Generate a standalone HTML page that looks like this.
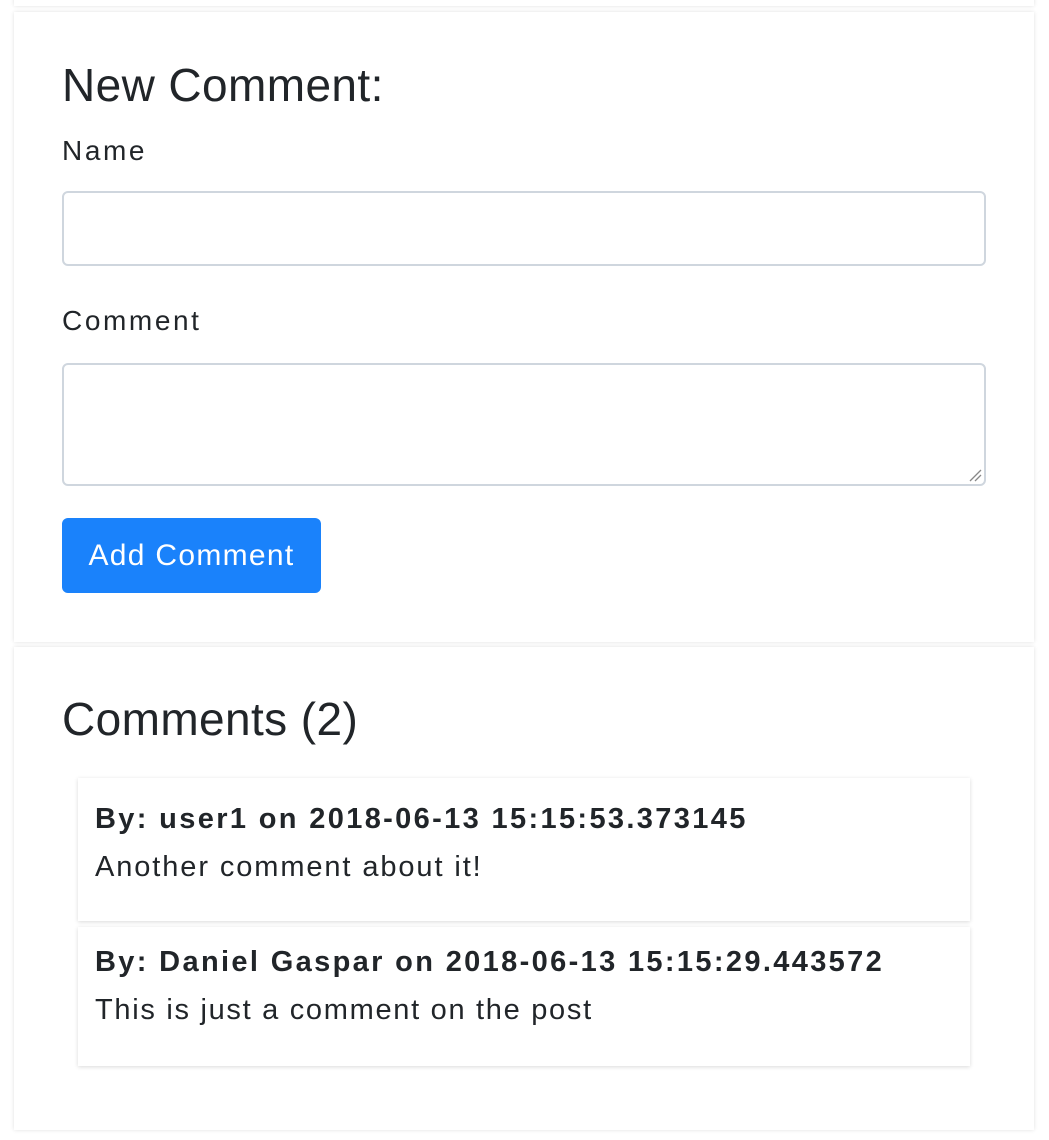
<!DOCTYPE html>
<html><head><style>
body{margin:0;background:#fff;font-family:"Liberation Sans",Arial,sans-serif;color:#212529;width:1049px;height:1140px;overflow:hidden;position:relative}
.card{position:absolute;left:14px;width:1020px;background:#fff;box-shadow:0 0 4px rgba(0,0,0,.12)}
.abs{position:absolute;white-space:nowrap}
.inp{position:absolute;left:48px;width:924px;border:2px solid #cfd6de;border-radius:6px;box-sizing:border-box;background:#fff}
.btn{position:absolute;left:48px;top:506px;width:259px;height:75px;background:#1a82fb;border-radius:6px;color:#fff;font-size:30px;line-height:75px;text-align:center;letter-spacing:1.3px}
.c{position:absolute;left:64px;width:892px;background:#fff;box-shadow:0 1px 4px rgba(0,0,0,.15)}
</style></head><body>
<div class="card" style="top:-20px;height:26px"></div>
<div class="card" style="top:12px;height:630px">
<div class="abs" style="left:48px;top:50px;font-size:46px;line-height:46px;letter-spacing:0.4px">New Comment:</div>
<div class="abs" style="left:48px;top:123px;font-size:28px;line-height:32px;letter-spacing:2.6px">Name</div>
<div class="inp" style="top:179px;height:75px"></div>
<div class="abs" style="left:48px;top:293px;font-size:28px;line-height:32px;letter-spacing:2.6px">Comment</div>
<div class="inp" style="top:351px;height:123px">
<svg style="position:absolute;right:2px;bottom:2px" width="14" height="14"><path d="M2 13L13 2M7 13L13 7" stroke="#888" stroke-width="1.3"/></svg></div>
<div class="btn">Add Comment</div>
</div>
<div class="card" style="top:647px;height:483px">
<div class="abs" style="left:48px;top:49px;font-size:46px;line-height:46px;letter-spacing:0.4px">Comments (2)</div>
<div class="c" style="top:131px;height:143px">
<div class="abs" style="left:17px;top:24px;font-size:29px;font-weight:bold;line-height:34px;letter-spacing:2.35px">By: user1 on 2018-06-13 15:15:53.373145</div>
<div class="abs" style="left:17px;top:72px;font-size:29px;line-height:34px;letter-spacing:1.9px">Another comment about it!</div></div>
<div class="c" style="top:280px;height:139px">
<div class="abs" style="left:17px;top:18px;font-size:29px;font-weight:bold;line-height:34px;letter-spacing:2.35px">By: Daniel Gaspar on 2018-06-13 15:15:29.443572</div>
<div class="abs" style="left:17px;top:66px;font-size:29px;line-height:34px;letter-spacing:1.7px">This is just a comment on the post</div></div>
</div>
</body></html>
